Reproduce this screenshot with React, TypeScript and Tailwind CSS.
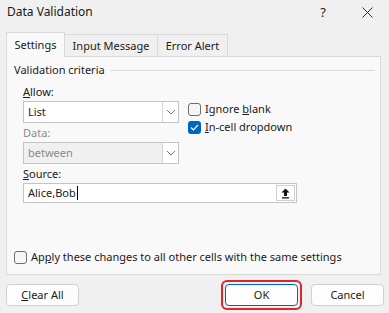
import React from 'react';

const font = { fontFamily: '"Noto Sans", "Open Sans", sans-serif' };

function Chevron() {
  return (
    <svg width="10" height="6" viewBox="0 0 10 6" fill="none">
      <path d="M1 1l4 4 4-4" stroke="#7a7a7a" strokeWidth="1" />
    </svg>
  );
}

function Combo({ value, disabled }: { value: string; disabled?: boolean }) {
  return (
    <div
      className={`flex h-[22px] w-[156px] shrink-0 border border-[#c4c4c4] ${
        disabled ? 'bg-[#f0f0f0] text-[#8a8a8a]' : 'bg-white text-[#1a1a1a]'
      }`}
    >
      <div className="flex flex-1 items-center pl-[4px]">{value}</div>
      <div className={`flex w-[16px] items-center justify-center border-l border-[#d6d6d6] ${disabled ? 'bg-white' : ''}`}>
        <Chevron />
      </div>
    </div>
  );
}

function Check({ checked }: { checked?: boolean }) {
  return checked ? (
    <div className="flex h-[13px] w-[13px] shrink-0 items-center justify-center rounded-[3px] bg-[#0067c0]">
      <svg width="9" height="7" viewBox="0 0 9 7" fill="none">
        <path d="M1 3.5l2.3 2.3L8 1" stroke="white" strokeWidth="1.2" />
      </svg>
    </div>
  ) : (
    <div className="h-[13px] w-[13px] shrink-0 rounded-[3px] border border-[#6e6e6e] bg-[#f6f6f6]" />
  );
}

function Btn({ children, primary }: { children: React.ReactNode; primary?: boolean }) {
  return (
    <div
      className={`flex h-[22px] w-[73px] items-center justify-center rounded-[4px] border bg-[#fdfdfd] text-[#1a1a1a] ${
        primary ? 'border-[#0067c0]' : 'border-[#d0d0d0]'
      }`}
    >
      {children}
    </div>
  );
}

export default function App() {
  return (
    <div className="h-[313px] w-[389px] overflow-hidden bg-[#f0f0f0] text-[11px] leading-[16px] text-[#1a1a1a]" style={font}>
      {/* title bar */}
      <div className="flex h-[23px] items-center pl-[7px] pr-[16px] pt-[1px]">
        <span className="text-[12px]">Data Validation</span>
        <span className="ml-auto mr-[36px] text-[13px]">?</span>
        <svg width="11" height="11" viewBox="0 0 11 11">
          <path d="M0.5 0.5l10 10M10.5 0.5l-10 10" stroke="#333" strokeWidth="1" />
        </svg>
      </div>

      {/* tabs */}
      <div className="mt-[9px] flex items-end pl-[6px]">
        <div className="relative z-10 -mb-px flex h-[25px] w-[59px] items-center justify-center border border-b-0 border-[#d9d9d9] bg-[#f9f9f9]">
          Settings
        </div>
        <div className="flex h-[22px] w-[93px] items-center justify-center border border-b-0 border-l-0 border-[#d9d9d9]">
          Input Message
        </div>
        <div className="flex h-[22px] w-[70px] items-center justify-center border border-b-0 border-l-0 border-[#d9d9d9]">
          Error Alert
        </div>
      </div>

      {/* panel */}
      <div className="ml-[6px] h-[219px] w-[375px] border border-[#d9d9d9] bg-[#f9f9f9] pl-[7px] pr-[5px] pt-[5px]">
        <div className="flex items-center">
          <span>Validation criteria</span>
          <div className="ml-[5px] h-px flex-1 bg-[#dcdcdc]" />
        </div>

        <div className="mt-[6px] pl-[9px]">
          <div>
            <span className="underline">A</span>llow:
          </div>
          <div className="mt-[1px] flex h-[22px] items-start">
            <Combo value="List" />
            <div className="ml-[9px] flex flex-col gap-[2px]">
              <div className="flex items-center gap-[4px]">
                <Check />
                <span>
                  Ignore <span className="underline">b</span>lank
                </span>
              </div>
              <div className="flex items-center gap-[4px]">
                <Check checked />
                <span>
                  <span className="underline">I</span>n-cell dropdown
                </span>
              </div>
            </div>
          </div>

          <div className="mt-[2px] text-[#8a8a8a]">Data:</div>
          <div className="mt-[1px]">
            <Combo value="between" disabled />
          </div>

          <div className="mt-[2px]">
            <span className="underline">S</span>ource:
          </div>
          <div className="mt-[1px] flex h-[20px] w-[274px] items-center border border-[#c4c4c4] bg-white pl-[4px] pr-[1px]">
            <span>Alice,Bob</span>
            <span className="ml-px h-[14px] w-px bg-black" />
            <div className="ml-auto flex h-[16px] w-[19px] items-center justify-center border border-[#d0d0d0] bg-[#fdfdfd]">
              <svg width="9" height="11" viewBox="0 0 9 11">
                <path d="M4.5 0.5L0.5 4.5H3V8H6V4.5H8.5Z" fill="#111" />
                <rect x="1" y="9.2" width="7" height="1.3" fill="#111" />
              </svg>
            </div>
          </div>
        </div>

        <div className="mt-[46px] flex items-center gap-[4px]">
          <Check />
          <span>
            Ap<span className="underline">p</span>ly these changes to all other cells with the same settings
          </span>
        </div>
      </div>

      {/* buttons */}
      <div className="mt-[5px] flex items-center pl-[6px] pr-[5px]">
        <Btn>
          <span>
            <span className="underline">C</span>lear All
          </span>
        </Btn>
        <div className="ml-auto rounded-[6px] border-2 border-[#e0242c] p-[2px]">
          <Btn primary>OK</Btn>
        </div>
        <div className="ml-[9px]">
          <Btn>Cancel</Btn>
        </div>
      </div>
    </div>
  );
}
